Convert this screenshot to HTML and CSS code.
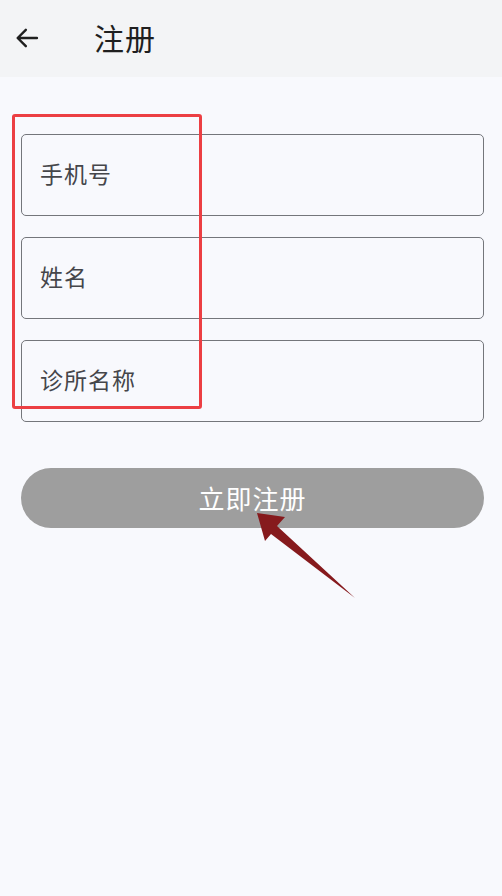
FILE: index.html
```html
<!DOCTYPE html>
<html lang="zh">
<head>
  <meta charset="UTF-8">
  <meta name="viewport" content="width=device-width, initial-scale=1.0">
  <title>注册</title>
  <link rel="stylesheet" href="styles.css">
</head>
<body>
  <div class="topbar">
    <svg class="back" width="28" height="28" viewBox="0 0 24 24">
      <path d="M20.5 12H4.5M11 5l-7 7 7 7" fill="none" stroke="#1f1f1f" stroke-width="2.1" stroke-linecap="round" stroke-linejoin="round"/>
    </svg>
    <h1>注册</h1>
  </div>

  <div class="page">
    <form class="form">
      <label class="field">手机号</label>
      <label class="field">姓名</label>
      <label class="field">诊所名称</label>
      <button type="button" class="submit">立即注册</button>
    </form>

    <!-- annotation marks -->
    <div class="mark-box"></div>
    <svg class="mark-arrow" width="502" height="896" viewBox="0 0 502 896">
      <polygon points="257,513 285,517 277,526 355,598 271,534 265,541" fill="#861a1d"/>
    </svg>
  </div>
</body>
</html>
```

FILE: styles.css
```css
body {
  margin: 0;
  padding: 0;
  font-family: "Noto Sans CJK SC", "Noto Sans", sans-serif;
  background: #f8f9fd;
  color: #333;
}
.topbar {
  height: 77px;
  background: #f3f4f6;
  display: flex;
  align-items: center;
  padding: 0 13px;
}
.back {
  margin-top: -2px;
}
.topbar h1 {
  margin: -4px 0 0 53px;
  font-size: 30px;
  font-weight: 400;
  color: #1f1f1f;
  line-height: 1;
  letter-spacing: 1px;
}
.page {
  position: relative;
  min-height: 819px;
}
.form {
  padding: 57px 18px 0 21px;
  display: flex;
  flex-direction: column;
  gap: 21px;
}
.field {
  height: 80px;
  border: 1px solid #74767b;
  border-radius: 5px;
  display: flex;
  align-items: center;
  padding: 0 0 4px 18px;
  box-sizing: border-box;
  height: 82px;
  font-size: 23px;
  color: #45464a;
  letter-spacing: 1px;
}
.submit {
  margin-top: 25px;
  height: 60px;
  border: none;
  border-radius: 30px;
  background: #9e9e9e;
  color: #fff;
  font-family: inherit;
  font-size: 26px;
  letter-spacing: 1px;
  padding-bottom: 2px;
}
.mark-box {
  position: absolute;
  left: 12px;
  top: 37px;
  width: 184px;
  height: 289px;
  border: 3px solid #ec3f43;
  border-radius: 3px;
}
.mark-arrow {
  position: absolute;
  left: 0;
  top: -77px;
  pointer-events: none;
}
```
